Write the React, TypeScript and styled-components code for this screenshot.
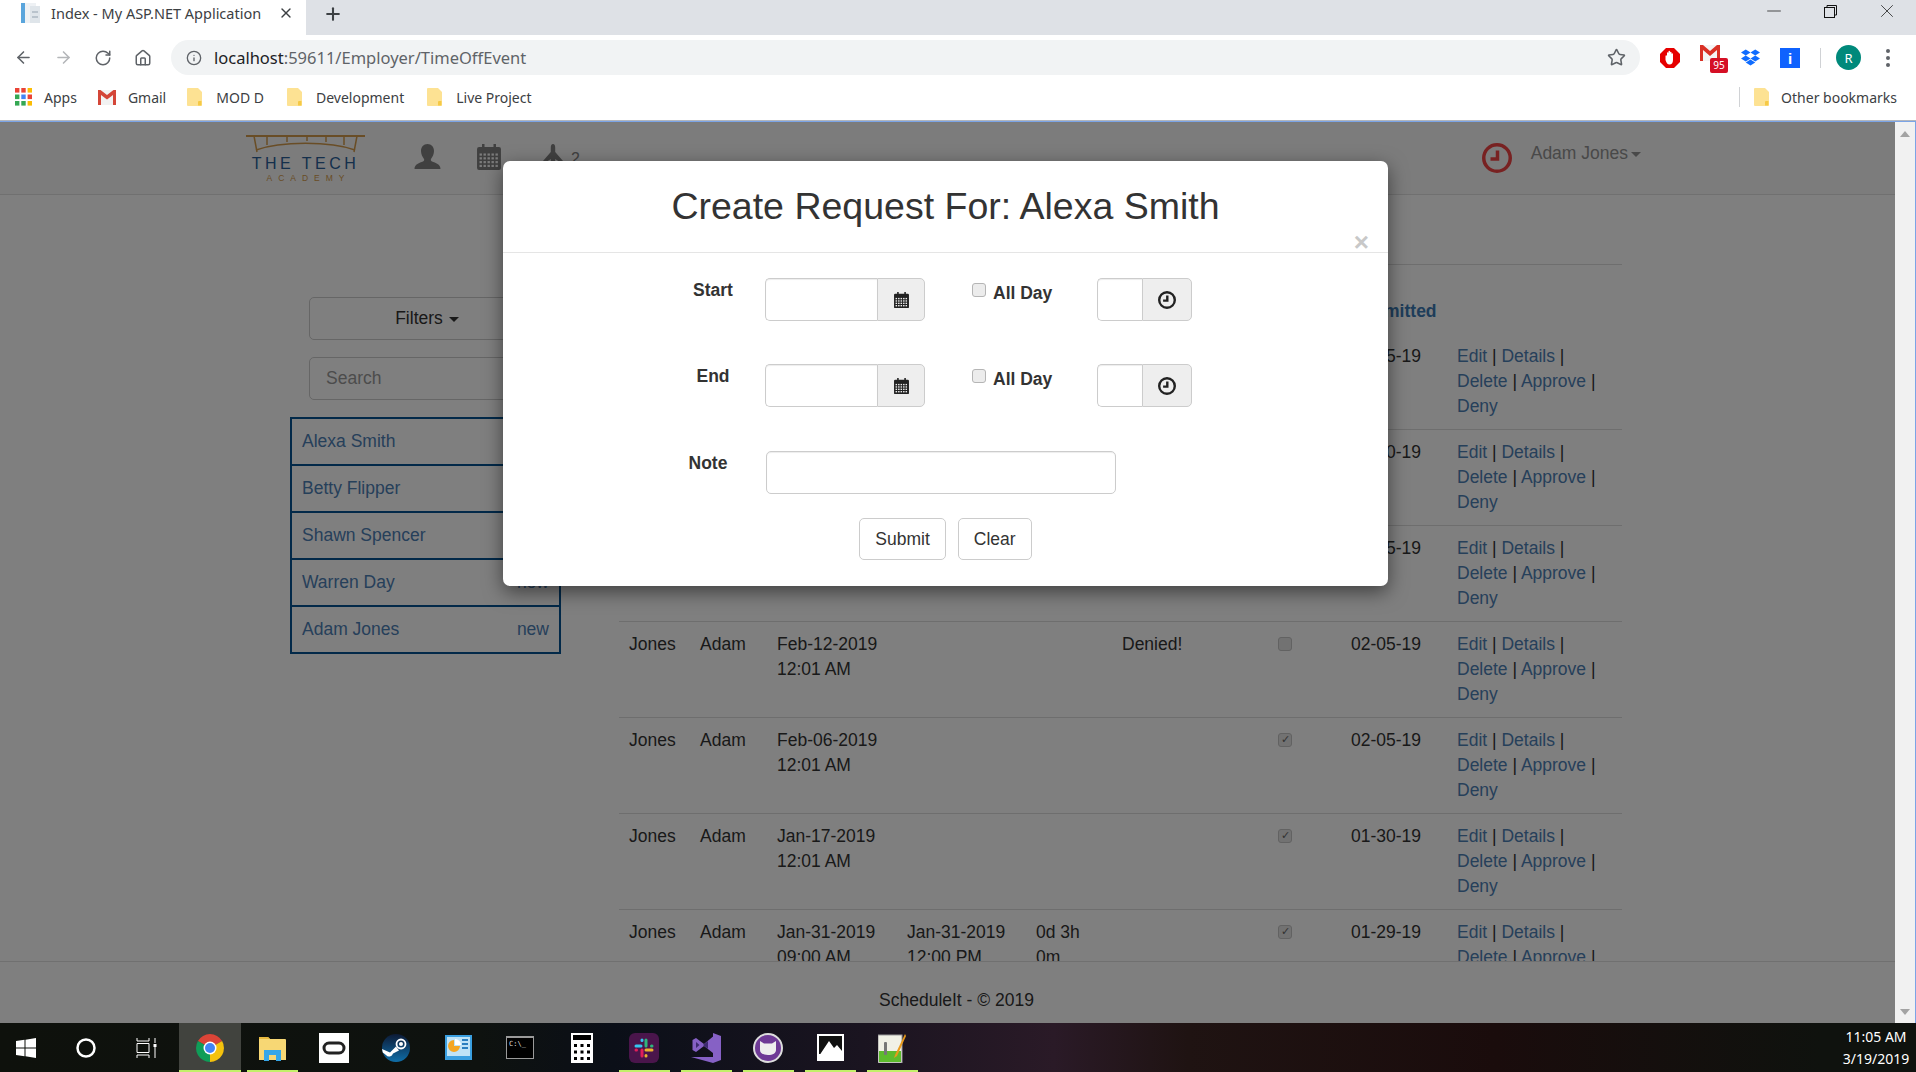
import React from "react";
import styled, { createGlobalStyle } from "styled-components";
import { ArrowLeft, ArrowRight, RotateCw, Home, Info, Star, X, Plus, Minus } from "lucide-react";
import { FaDropbox } from "react-icons/fa";

const GlobalStyle = createGlobalStyle`
  html, body { margin: 0; padding: 0; overflow: hidden; }
  * { box-sizing: border-box; }
`;

const CHROME_FONT = `"Noto Sans", "Open Sans", sans-serif`;
const PAGE_FONT = `"Liberation Sans", Arial, sans-serif`;

const Screen = styled.div`
  width: 1916px;
  height: 1072px;
  display: flex;
  flex-direction: column;
  overflow: hidden;
  font-family: ${PAGE_FONT};
  background: #fff;
`;

/* ---- browser chrome ---- */

const TabStrip = styled.div`
  height: 35px;
  flex: none;
  background: #dee1e6;
  display: flex;
  align-items: center;
`;

const Tab = styled.div`
  width: 306px;
  height: 35px;
  background: #fff;
  display: flex;
  align-items: center;
  padding: 0 12px 9px 21px;
  font-family: ${CHROME_FONT};
  font-size: 14.5px;
  color: #3c4043;
`;

const TabTitle = styled.span`
  margin-left: 10px;
  flex: 1;
  white-space: nowrap;
`;

const NewTab = styled.div`
  margin-left: 17px;
  display: flex;
  color: #3c4043;
  padding-bottom: 7px;
`;

const WindowControls = styled.div`
  margin-left: auto;
  display: flex;
  align-items: center;
  gap: 39px;
  padding: 0 18px 13px 0;
  color: #111;
`;

const Toolbar = styled.div`
  height: 47px;
  flex: none;
  background: #fff;
  display: flex;
  align-items: center;
  padding: 0 0 2px 14px;
`;

const NavButton = styled.div<{ $muted?: boolean }>`
  width: 40px;
  display: flex;
  color: ${(p) => (p.$muted ? "#b4b6b9" : "#5f6368")};
`;

const UrlPill = styled.div`
  width: 1469px;
  height: 35px;
  margin-left: -3px;
  margin-right: 20px;
  border-radius: 18px;
  background: #f1f3f4;
  display: flex;
  align-items: center;
  padding: 0 14px 0 15px;
  color: #5f6368;
  font-family: ${CHROME_FONT};
  font-size: 16.5px;
`;

const UrlText = styled.span`
  margin-left: 12px;
  flex: 1;
  white-space: nowrap;
`;

const UrlHost = styled.span`
  color: #202124;
`;

const ExtRow = styled.div`
  display: flex;
  align-items: center;
`;

const ExtSlot = styled.div<{ $w: number }>`
  width: ${(p) => p.$w}px;
  display: flex;
`;

const ToolbarDivider = styled.div`
  width: 1px;
  height: 20px;
  background: #d0d2d5;
  margin: 0 15px 0 20px;
`;

const Avatar = styled.div`
  width: 25px;
  height: 25px;
  border-radius: 50%;
  background: #00897b;
  color: #fff;
  font-family: ${CHROME_FONT};
  font-size: 13px;
  display: flex;
  align-items: center;
  justify-content: center;
`;

const Kebab = styled.div`
  margin-left: 25px;
  display: flex;
  flex-direction: column;
  gap: 3px;
`;

const KebabDot = styled.span`
  width: 4px;
  height: 4px;
  border-radius: 50%;
  background: #5f6368;
`;

const BookmarkBar = styled.div`
  height: 39px;
  flex: none;
  background: #fff;
  border-bottom: 1px solid #b3b7bf;
  display: flex;
  align-items: center;
  gap: 21px;
  padding: 0 19px 8px 15px;
  font-family: ${CHROME_FONT};
  font-size: 14px;
  color: #3c4043;
`;

const Bookmark = styled.div<{ $gap?: number; $push?: number }>`
  display: flex;
  align-items: center;
  gap: ${(p) => p.$gap ?? 12}px;
  margin-left: ${(p) => p.$push ?? 0}px;
  white-space: nowrap;
`;

const BookmarkDivider = styled.div`
  width: 1px;
  height: 20px;
  background: #d0d2d5;
  margin-left: auto;
  margin-right: -7px;
`;

/* ---- page ---- */

const Viewport = styled.div`
  flex: 1;
  min-height: 0;
  display: flex;
  border-top: 1px solid #7ba4e6;
  border-right: 1px solid #7ba4e6;
`;

const Page = styled.div`
  position: relative;
  flex: 1;
  min-width: 0;
  display: flex;
  flex-direction: column;
  color: #333;
  font-size: 17.5px;
  line-height: 25px;
`;

const Scrollbar = styled.div`
  width: 20px;
  flex: none;
  background: #f1f1f1;
  display: flex;
  flex-direction: column;
  justify-content: space-between;
  align-items: center;
  padding: 9px 0 8px;
`;

const ScrollArrow = styled.div<{ $down?: boolean }>`
  width: 0;
  height: 0;
  border-left: 5px solid transparent;
  border-right: 5px solid transparent;
  ${(p) => (p.$down ? "border-top: 6px solid #a3a3a3;" : "border-bottom: 6px solid #a3a3a3;")}
`;

const TopNav = styled.nav`
  height: 73px;
  flex: none;
  background: #f8f8f8;
  border-bottom: 1px solid #e0e0e0;
  display: flex;
  padding: 13px 254px 0 246px;
`;

const Logo = styled.div`
  width: 119px;
  display: flex;
  flex-direction: column;
  align-items: center;
`;

const LogoMain = styled.span`
  margin-top: 3px;
  font-size: 16px;
  line-height: 16px;
  letter-spacing: 3.5px;
  white-space: nowrap;
  color: #2a6098;
`;

const LogoSub = styled.span`
  margin-top: 2px;
  padding-left: 6px;
  font-size: 8.5px;
  line-height: 9px;
  letter-spacing: 6px;
  white-space: nowrap;
  color: #d39b4c;
`;

const NavIcons = styled.div`
  display: flex;
  align-items: flex-start;
  padding: 9px 0 0 49px;
`;

const NavIcon = styled.div<{ $w: number }>`
  width: ${(p) => p.$w}px;
  display: flex;
`;

const NavBadge = styled.sup`
  font-size: 16px;
  line-height: 16px;
  margin: 7px 0 0 8px;
  color: #808080;
`;

const UserMenu = styled.div`
  margin-left: auto;
  display: flex;
  align-items: flex-start;
  gap: 19px;
  padding-top: 8px;
  color: #929292;
`;

const UserName = styled.span`
  display: flex;
  align-items: center;
  gap: 3px;
  margin-top: -2px;
`;

const Caret = styled.span`
  display: inline-block;
  width: 0;
  height: 0;
  margin-top: 2px;
  border-left: 5px solid transparent;
  border-right: 5px solid transparent;
  border-top: 5px solid currentColor;
`;

const Main = styled.main`
  flex: 1;
  min-height: 0;
  overflow: hidden;
  display: flex;
  gap: 58px;
  padding-left: 290px;
`;

const Sidebar = styled.aside`
  width: 271px;
  flex: none;
  padding-top: 102px;
`;

const FilterButton = styled.div`
  width: 236px;
  height: 43px;
  margin-left: 19px;
  border: 1px solid #ccc;
  border-radius: 5px;
  background: #fff;
  display: flex;
  align-items: center;
  justify-content: center;
  gap: 6px;
`;

const SearchBox = styled.input`
  display: block;
  width: 236px;
  height: 43px;
  margin: 17px 0 17px 19px;
  padding: 0 16px;
  border: 1px solid #ccc;
  border-radius: 5px;
  font: inherit;
  &::placeholder {
    color: #999;
  }
`;

const PeopleList = styled.div`
  border: 2px solid #045292;
`;

const PersonRow = styled.div`
  height: 47px;
  display: flex;
  align-items: center;
  justify-content: space-between;
  padding: 0 10px 0 10px;
  color: #4d80b5;
  border-bottom: 2px solid #045292;
  &:last-child {
    height: 45px;
    border-bottom: 0;
  }
`;

const TableWrap = styled.div`
  width: 1003px;
  flex: none;
  padding-top: 69px;
`;

const Table = styled.table`
  width: 1003px;
  table-layout: fixed;
  border-collapse: collapse;
  border-top: 1px solid #ddd;
`;

const HeadCell = styled.th`
  height: 69px;
  padding: 34px 10px 9px;
  text-align: left;
  vertical-align: top;
  color: #3c7ab4;
  font-weight: 700;
  white-space: nowrap;
`;

const Cell = styled.td`
  height: 96px;
  padding: 10px;
  vertical-align: top;
  border-bottom: 1px solid #ddd;
`;

const CheckCell = styled(Cell)`
  padding-top: 15px;
`;

const ActionLink = styled.a`
  color: #4d80b5;
  text-decoration: none;
`;

const RowCheck = styled.input`
  appearance: none;
  display: block;
  position: relative;
  width: 14px;
  height: 14px;
  margin: 0;
  border: 1px solid #c4c4c4;
  border-radius: 3px;
  background: #e4e4e4;
  &:checked::after {
    content: "✓";
    position: absolute;
    left: 2px;
    top: 0;
    font-size: 11px;
    line-height: 12px;
    font-weight: 700;
    font-family: "DejaVu Sans", sans-serif;
    color: #666;
  }
`;

const Footer = styled.footer`
  height: 62px;
  flex: none;
  border-top: 1px solid #e0e0e0;
  padding: 26px 0 0 18px;
  text-align: center;
`;

/* ---- modal ---- */

const Backdrop = styled.div`
  position: absolute;
  inset: 0;
  background: rgba(0, 0, 0, 0.5);
  display: flex;
  justify-content: center;
  align-items: flex-start;
  padding: 39px 4px 0 0;
`;

const Modal = styled.div`
  width: 885px;
  height: 425px;
  background: #fff;
  border-radius: 7px;
  box-shadow: 0 6px 19px rgba(0, 0, 0, 0.5);
  display: flex;
  flex-direction: column;
`;

const ModalHeader = styled.div`
  position: relative;
  height: 92px;
  flex: none;
  padding-top: 20px;
  border-bottom: 1px solid #e5e5e5;
  text-align: center;
`;

const ModalTitle = styled.h2`
  margin: 0;
  font-size: 37.5px;
  line-height: 50px;
  font-weight: 500;
  color: #333;
`;

const CloseMark = styled.span`
  position: absolute;
  right: 19px;
  bottom: -3px;
  font-size: 26px;
  line-height: 26px;
  font-weight: 700;
  color: #c8c8c8;
`;

const ModalBody = styled.div`
  padding-top: 25px;
`;

const FormRow = styled.div<{ $gap: number }>`
  display: grid;
  grid-template-columns: 262px 160px 172px 95px;
  align-items: start;
  margin-bottom: ${(p) => p.$gap}px;
`;

const FieldLabel = styled.label<{ $nudge?: number }>`
  justify-self: end;
  width: 104px;
  padding-right: ${(p) => p.$nudge ?? 0}px;
  text-align: center;
  font-weight: 700;
`;

const InputGroup = styled.div`
  display: flex;
  height: 43px;
`;

const TextInput = styled.input<{ $w: number }>`
  width: ${(p) => p.$w}px;
  height: 100%;
  flex: none;
  border: 1px solid #ccc;
  border-right: 0;
  border-radius: 5px 0 0 5px;
  box-shadow: inset 0 1px 1px rgba(0, 0, 0, 0.075);
  outline: none;
`;

const Addon = styled.span`
  flex: 1;
  display: flex;
  align-items: center;
  justify-content: center;
  background: #eee;
  border: 1px solid #ccc;
  border-radius: 0 5px 5px 0;
  padding-top: 1px;
`;

const AllDay = styled.label`
  display: flex;
  align-items: flex-start;
  gap: 7px;
  padding: 3px 0 0 47px;
  font-weight: 700;
`;

const AllDayBox = styled.input`
  appearance: none;
  width: 14px;
  height: 14px;
  margin: 2px 0 0;
  border: 1px solid #b5b5b5;
  border-radius: 3px;
  background: #ececec;
`;

const NoteInput = styled.input`
  display: block;
  width: 350px;
  height: 43px;
  margin-left: 1px;
  border: 1px solid #ccc;
  border-radius: 5px;
  box-shadow: inset 0 1px 1px rgba(0, 0, 0, 0.075);
`;

const NoteSlot = styled.div`
  grid-column: 2 / span 3;
`;

const ButtonRow = styled.div`
  display: flex;
  justify-content: center;
  gap: 12px;
`;

const ActionButton = styled.button`
  height: 42px;
  padding: 0 15px;
  background: #fff;
  border: 1px solid #ccc;
  border-radius: 5px;
  font: inherit;
  color: #333;
`;

/* ---- taskbar ---- */

const Taskbar = styled.div`
  height: 49px;
  flex: none;
  display: flex;
  align-items: stretch;
  color: #fff;
  background: linear-gradient(
    90deg,
    #0e110c 0%,
    #0e120f 25%,
    #0b0f18 32%,
    #1a1420 45%,
    #2a1a27 55%,
    #1f1312 62%,
    #1a0c0c 78%,
    #0f120e 95%
  );
`;

const TaskSlot = styled.div<{ $w?: number; $active?: boolean; $open?: boolean }>`
  position: relative;
  width: ${(p) => p.$w ?? 62}px;
  flex: none;
  display: flex;
  align-items: center;
  justify-content: center;
  background: ${(p) => (p.$active ? "#41433e" : "transparent")};
  &::after {
    content: "";
    display: ${(p) => (p.$open ? "block" : "none")};
    position: absolute;
    bottom: 0;
    left: ${(p) => (p.$active ? 0 : 6)}px;
    right: ${(p) => (p.$active ? 0 : 5)}px;
    height: 2px;
    background: #c2f06a;
  }
`;

const TrayClock = styled.div`
  margin-left: auto;
  padding: 3px 4px 0 0;
  width: 76px;
  text-align: center;
  font-family: ${CHROME_FONT};
  font-size: 14px;
  line-height: 22px;
  white-space: nowrap;
`;

/* ---- drawings ---- */

const FolderIcon = () => (
  <svg width="15" height="18" viewBox="0 0 15 18">
    <path d="M1 0h10l4 4v13a1 1 0 0 1-1 1H1a1 1 0 0 1-1-1V1a1 1 0 0 1 1-1z" fill="#fde293" />
    <path d="M11 17.5h3.5V13H12a1 1 0 0 0-1 1z" fill="#f6c945" />
  </svg>
);

const AppsIcon = () => {
  const colors = ["#ea4335", "#ea4335", "#fbbc04", "#34a853", "#4285f4", "#ea4335", "#34a853", "#34a853", "#fbbc04"];
  return (
    <svg width="17" height="18" viewBox="0 0 17 18">
      {colors.map((c, i) => (
        <rect key={i} x={(i % 3) * 6.3} y={Math.floor(i / 3) * 6.5} width="4.4" height="4.6" fill={c} />
      ))}
    </svg>
  );
};

const GmailMark = () => (
  <svg width="18" height="15" viewBox="0 0 18 15">
    <rect width="18" height="15" fill="#f2f2f2" />
    <path d="M0 0h2.5l6.5 5 6.5-5H18v15h-3V5L9 9.5 3 5v10H0z" fill="#d44638" />
  </svg>
);

const AdblockIcon = () => (
  <svg width="20" height="20" viewBox="0 0 20 20">
    <path d="M6 0h8l6 6v8l-6 6H6l-6-6V6z" fill="#e60000" />
    <path d="M5.500 8c0-1 1.500-1 1.500 0V5c0-1 1.500-1 1.500 0V3.500c0-1 1.500-1 1.500 0V4.500c0-1 1.500-1 1.500 0V6c0-1 1.500-1 1.500 0v6c0 3-1.500 4.500-3.500 4.500S6.500 15 5.500 12z" fill="#fff" />
  </svg>
);

const GmailBadge = styled.span`
  position: absolute;
  left: 10px;
  top: 13px;
  width: 18px;
  height: 15px;
  border-radius: 2px;
  background: #d50f25;
  color: #fff;
  font-family: ${CHROME_FONT};
  font-size: 10px;
  line-height: 15px;
  text-align: center;
`;

const GmailExt = styled.div`
  position: relative;
  width: 28px;
  height: 26px;
`;

const GmailExtIcon = () => (
  <GmailExt>
    <svg width="20" height="16" viewBox="0 0 20 16">
      <rect width="20" height="16" fill="#f4f4f4" />
      <path d="M0 0h3l7 6 7-6h3v16h-3V5l-7 6-7-6v11H0z" fill="#d93025" />
    </svg>
    <GmailBadge>95</GmailBadge>
  </GmailExt>
);

const InfoExt = styled.div`
  width: 20px;
  height: 20px;
  background: #0f62fe;
  color: #fff;
  font-family: ${PAGE_FONT};
  font-weight: 700;
  font-size: 15px;
  line-height: 22px;
  text-align: center;
`;

const TabFavicon = () => (
  <svg width="20" height="22" viewBox="0 0 20 22">
    <rect x="0" y="1" width="4" height="20" fill="#5aa5dc" />
    <rect x="4" y="1" width="11" height="20" fill="#eef1f4" />
    <rect x="9" y="4" width="10" height="17" fill="#dfe5ea" />
    <rect x="11" y="9" width="6" height="2" fill="#b9c3cc" />
    <rect x="11" y="14" width="6" height="2" fill="#b9c3cc" />
  </svg>
);

const RestoreIcon = () => (
  <svg width="13" height="13" viewBox="0 0 13 13" fill="none" stroke="#111" strokeWidth="1">
    <rect x="0.500" y="2.500" width="10" height="10" />
    <path d="M3 2.500V.5h9.500V10h-2" />
  </svg>
);

const BridgeLogo = () => (
  <svg width="119" height="18" viewBox="0 0 119 18" fill="none" stroke="#d39b4c" strokeWidth="1.5">
    <path d="M0 1h119" strokeWidth="2" />
    <path d="M8 1l3 16M21 1v9M41 1v6M61 1v5M80 1v6M98 1v9M111 1l-3 16" />
    <path d="M10 15C35 6 84 6 109 15" />
  </svg>
);

const UserGlyph = () => (
  <svg width="27" height="25" viewBox="0 0 26 25" fill="#808080">
    <path d="M13 0C9 0 6.500 3 6.500 7c0 3 1.500 6 3 8 .5 1 0 2-1 2.500C5 19 0 20 0 25h26c0-5-5-6-8.500-7.500-1-.5-1.500-1.500-1-2.500 1.500-2 3-5 3-8 0-4-2.500-7-6.500-7z" />
  </svg>
);

const CalendarGlyph = ({ size, color, hole }: { size: number; color: string; hole: string }) => (
  <svg width={size} height={size * 1.08} viewBox="0 0 24 26">
    <rect x="5" y="0" width="2.500" height="5" fill={color} />
    <rect x="16.500" y="0" width="2.500" height="5" fill={color} />
    <rect x="0" y="3" width="24" height="23" rx="2" fill={color} />
    {Array.from({ length: 20 }).map((_, i) => (
      <rect key={i} x={2.5 + (i % 5) * 4} y={9.5 + Math.floor(i / 5) * 3.8} width="2.400" height="2.200" fill={hole} />
    ))}
  </svg>
);

const PlaneGlyph = () => (
  <svg width="20" height="25" viewBox="0 0 20 25" fill="#808080">
    <path d="M10 0c1.500 0 2.200 1.500 2.200 3.500V8L20 17v3l-7.800-5v5l2.800 3v2H5v-2l2.800-3v-5L0 20v-3l7.800-9V3.500C7.800 1.500 8.500 0 10 0z" />
  </svg>
);

const ClockGlyph = ({ size, color, ring, hand }: { size: number; color: string; ring: number; hand: number }) => (
  <svg width={size} height={size} viewBox="0 0 30 30" fill="none" stroke={color}>
    <circle cx="15" cy="15" r={15 - ring / 2} strokeWidth={ring} />
    <path d="M15.500 7.500v8.500H8.500" strokeWidth={hand} />
  </svg>
);

const WinLogo = () => (
  <svg width="20" height="20" viewBox="0 0 20 20" fill="#fff">
    <path d="M0 3l8.500-1.200V9.500H0zM9.500 1.700L20 0v9.500H9.500zM0 10.500h8.500v7.700L0 17zM9.500 10.500H20V20L9.500 18.300z" />
  </svg>
);

const CortanaRing = () => (
  <svg width="20" height="20" viewBox="0 0 20 20" fill="none" stroke="#fff" strokeWidth="2.500">
    <circle cx="10" cy="10" r="8.500" />
  </svg>
);

const TaskViewIcon = () => (
  <svg width="21" height="20" viewBox="0 0 21 20" fill="none" stroke="#fff" strokeWidth="1">
    <path d="M1 0v3h12V0M1 5.500h12v9H1zM1 20v-3h12v3M19 0v5M19 9v11" />
    <rect x="17.500" y="6" width="3" height="3" fill="#fff" stroke="none" />
  </svg>
);

const ChromeIcon = () => (
  <svg width="28" height="28" viewBox="0 0 28 28">
    <path d="M14 14L1.900 7A14 14 0 0 1 26.100 7z" fill="#db4437" />
    <path d="M14 14l12.100-7A14 14 0 0 1 14 28z" fill="#f4c20d" />
    <path d="M14 14v14A14 14 0 0 1 1.900 7z" fill="#0f9d58" />
    <circle cx="14" cy="14" r="6.500" fill="#fff" />
    <circle cx="14" cy="14" r="5" fill="#4285f4" />
  </svg>
);

const ExplorerIcon = () => (
  <svg width="27" height="26" viewBox="0 0 27 26">
    <path d="M0 3a1 1 0 0 1 1-1h8l2 2h15a1 1 0 0 1 1 1v20H0z" fill="#f7d774" />
    <path d="M0 2h9l2 2H0z" fill="#e8b93f" />
    <path d="M5 26V15h17v11h-5v-6h-7v6z" fill="#35a6e8" />
  </svg>
);

const OculusIcon = () => (
  <svg width="30" height="30" viewBox="0 0 30 30">
    <rect width="30" height="30" fill="#fff" />
    <rect x="5" y="10" width="20" height="10" rx="5" fill="none" stroke="#222" strokeWidth="3" />
  </svg>
);

const SteamIcon = () => (
  <svg width="28" height="28" viewBox="0 0 28 28">
    <defs>
      <linearGradient id="steamBg" x1="0" y1="0" x2="0" y2="1">
        <stop offset="0" stopColor="#0d1a35" />
        <stop offset="1" stopColor="#0f6ea8" />
      </linearGradient>
    </defs>
    <circle cx="14" cy="14" r="14" fill="url(#steamBg)" />
    <circle cx="19" cy="10" r="4.500" fill="none" stroke="#fff" strokeWidth="1.800" />
    <circle cx="19" cy="10" r="2" fill="#fff" />
    <path d="M0 15l8 3.500 6-6 3 4-6 3a4 4 0 0 1-7 1.500L.8 18.500z" fill="#fff" />
  </svg>
);

const ControlPanelIcon = () => (
  <svg width="27" height="27" viewBox="0 0 27 27">
    <rect y="1" width="27" height="25" fill="#3a9fe0" />
    <rect x="2" y="3" width="23" height="19" fill="#bfe3f7" />
    <path d="M9 6a6 6 0 1 0 6 6H9z" fill="#f5a623" />
    <path d="M10 5v6h6a6 6 0 0 0-6-6z" fill="#fff" />
    <path d="M17 6h6M17 10h6M17 14h6" stroke="#2a7fc0" strokeWidth="2" />
  </svg>
);

const CmdBox = styled.div`
  width: 28px;
  height: 23px;
  border: 1px solid #9a9a9a;
  border-top-width: 2px;
  background: #000;
  color: #ddd;
  font-family: "DejaVu Sans Mono", monospace;
  font-size: 7px;
  line-height: 12px;
  padding-left: 2px;
  white-space: nowrap;
`;

const CalcIcon = () => (
  <svg width="22" height="30" viewBox="0 0 22 30">
    <rect width="22" height="30" fill="#fff" />
    <rect x="2" y="2" width="18" height="5" fill="#000" />
    {Array.from({ length: 9 }).map((_, i) => (
      <rect key={i} x={3 + (i % 3) * 6.500} y={11 + Math.floor(i / 3) * 6.500} width="3" height="3" fill="#000" />
    ))}
  </svg>
);

const SlackIcon = () => (
  <svg width="30" height="30" viewBox="0 0 30 30" fill="none" strokeWidth="3" strokeLinecap="round">
    <rect width="30" height="30" rx="6" fill="#4a154b" />
    <path d="M7 13h5M13 7v.5" stroke="#36c5f0" />
    <path d="M17 7v6M23 13h-.5" stroke="#2eb67d" />
    <path d="M23 17h-6M17 23v-.5" stroke="#ecb22e" />
    <path d="M13 23v-6M7 17h.5" stroke="#e01e5a" />
  </svg>
);

const VsIcon = () => (
  <svg width="30" height="30" viewBox="0 0 30 30">
    <path d="M22 0l8 3v24l-8 3L0 24l22 0V3.500L13 11 5 5 1.500 7v10L5 19l8-6 9 7z" fill="#8661c5" />
    <path d="M5 9v6l3.500-3zM17 8l-5 4 5 4z" fill="#3e2a70" />
  </svg>
);

const GitHubDesktopIcon = () => (
  <svg width="30" height="30" viewBox="0 0 30 30">
    <circle cx="15" cy="15" r="14" fill="#6e3a96" stroke="#ddd" strokeWidth="2" />
    <path d="M7 8l4 2.500h8L23 8v9c0 3-3 5-8 5s-8-2-8-5z" fill="#eee" />
  </svg>
);

const PhotoIcon = () => (
  <svg width="27" height="27" viewBox="0 0 27 27">
    <rect width="27" height="27" fill="#fff" />
    <rect x="2" y="2" width="23" height="18" fill="#111" />
    <path d="M2 22l10-15 5 7 3-3 5 6v7H2z" fill="#fff" />
  </svg>
);

const NppIcon = () => (
  <svg width="28" height="30" viewBox="0 0 28 30">
    <rect x="0" y="2" width="24" height="28" fill="#f1f1e6" stroke="#999" />
    <rect x="1" y="18" width="22" height="11" fill="#5dbb2d" />
    <rect x="6" y="9" width="3" height="13" rx="1" fill="#777" />
    <path d="M27 1L17 22l-1 3 3-2L28 3z" fill="#e89a1c" />
  </svg>
);

const actions = (
  <>
    <ActionLink href="#">Edit</ActionLink> | <ActionLink href="#">Details</ActionLink> |{" "}
    <ActionLink href="#">Delete</ActionLink> | <ActionLink href="#">Approve</ActionLink> |{" "}
    <ActionLink href="#">Deny</ActionLink>
  </>
);

const people = ["Alexa Smith", "Betty Flipper", "Shawn Spencer", "Warren Day", "Adam Jones"];

type Row = {
  start: string;
  end: string;
  span: string;
  status: string;
  approved: boolean;
  submitted: string;
};

const rows: Row[] = [
  { start: "Mar-20-2019 12:01 AM", end: "", span: "", status: "", approved: true, submitted: "03-15-19" },
  { start: "Mar-12-2019 12:01 AM", end: "", span: "", status: "", approved: true, submitted: "03-10-19" },
  { start: "Mar-01-2019 12:01 AM", end: "", span: "", status: "", approved: true, submitted: "02-25-19" },
  { start: "Feb-12-2019 12:01 AM", end: "", span: "", status: "Denied!", approved: false, submitted: "02-05-19" },
  { start: "Feb-06-2019 12:01 AM", end: "", span: "", status: "", approved: true, submitted: "02-05-19" },
  { start: "Jan-17-2019 12:01 AM", end: "", span: "", status: "", approved: true, submitted: "01-30-19" },
  { start: "Jan-31-2019 09:00 AM", end: "Jan-31-2019 12:00 PM", span: "0d 3h 0m", status: "", approved: true, submitted: "01-29-19" },
];

const columnWidths = [71, 77, 130, 129, 86, 156, 73, 106, 175];
const headings = ["Last", "First", "Start", "End", "Length", "Status", "OK", "Submitted", ""];

const taskIcons: { key: string; icon: React.ReactNode; open?: boolean; active?: boolean }[] = [
  { key: "chrome", icon: <ChromeIcon />, open: true, active: true },
  { key: "explorer", icon: <ExplorerIcon />, open: true },
  { key: "oculus", icon: <OculusIcon /> },
  { key: "steam", icon: <SteamIcon /> },
  { key: "control", icon: <ControlPanelIcon /> },
  { key: "cmd", icon: <CmdBox>C:\_</CmdBox> },
  { key: "calc", icon: <CalcIcon /> },
  { key: "slack", icon: <SlackIcon />, open: true },
  { key: "vs", icon: <VsIcon />, open: true },
  { key: "github", icon: <GitHubDesktopIcon />, open: true },
  { key: "photos", icon: <PhotoIcon />, open: true },
  { key: "npp", icon: <NppIcon />, open: true },
];

const DateField = ({ width, icon }: { width: number; icon: React.ReactNode }) => (
  <InputGroup>
    <TextInput $w={width} />
    <Addon>{icon}</Addon>
  </InputGroup>
);

const calendarAddon = <CalendarGlyph size={15} color="#222" hole="#eee" />;
const clockAddon = <ClockGlyph size={18} color="#222" ring={4} hand={4} />;

const App = () => {
  return (
    <Screen>
      <GlobalStyle />
      <TabStrip>
        <Tab>
          <TabFavicon />
          <TabTitle>Index - My ASP.NET Application</TabTitle>
          <X size={16} strokeWidth={2} />
        </Tab>
        <NewTab>
          <Plus size={20} strokeWidth={2.5} />
        </NewTab>
        <WindowControls>
          <Minus size={22} strokeWidth={0.8} />
          <RestoreIcon />
          <X size={22} strokeWidth={0.8} />
        </WindowControls>
      </TabStrip>

      <Toolbar>
        <NavButton>
          <ArrowLeft size={19} />
        </NavButton>
        <NavButton $muted>
          <ArrowRight size={19} />
        </NavButton>
        <NavButton>
          <RotateCw size={18} />
        </NavButton>
        <NavButton>
          <Home size={18} />
        </NavButton>
        <UrlPill>
          <Info size={16} />
          <UrlText>
            <UrlHost>localhost</UrlHost>:59611/Employer/TimeOffEvent
          </UrlText>
          <Star size={19} />
        </UrlPill>
        <ExtRow>
          <ExtSlot $w={40}>
            <AdblockIcon />
          </ExtSlot>
          <ExtSlot $w={41}>
            <GmailExtIcon />
          </ExtSlot>
          <ExtSlot $w={39}>
            <FaDropbox size={19} color="#0f6cff" />
          </ExtSlot>
          <ExtSlot $w={20}>
            <InfoExt>i</InfoExt>
          </ExtSlot>
          <ToolbarDivider />
          <Avatar>R</Avatar>
          <Kebab>
            <KebabDot />
            <KebabDot />
            <KebabDot />
          </Kebab>
        </ExtRow>
      </Toolbar>

      <BookmarkBar>
        <Bookmark>
          <AppsIcon />
          Apps
        </Bookmark>
        <Bookmark>
          <GmailMark />
          Gmail
        </Bookmark>
        <Bookmark $gap={14}>
          <FolderIcon />
          MOD D
        </Bookmark>
        <Bookmark $gap={14} $push={2}>
          <FolderIcon />
          Development
        </Bookmark>
        <Bookmark $gap={14} $push={2}>
          <FolderIcon />
          Live Project
        </Bookmark>
        <BookmarkDivider />
        <Bookmark>
          <FolderIcon />
          Other bookmarks
        </Bookmark>
      </BookmarkBar>

      <Viewport>
        <Page>
          <TopNav>
            <Logo>
              <BridgeLogo />
              <LogoMain>THE TECH</LogoMain>
              <LogoSub>ACADEMY</LogoSub>
            </Logo>
            <NavIcons>
              <NavIcon $w={63}>
                <UserGlyph />
              </NavIcon>
              <NavIcon $w={66}>
                <CalendarGlyph size={24} color="#808080" hole="#f8f8f8" />
              </NavIcon>
              <NavIcon $w={63}>
                <PlaneGlyph />
                <NavBadge>2</NavBadge>
              </NavIcon>
            </NavIcons>
            <UserMenu>
              <ClockGlyph size={30} color="#f04545" ring={3.5} hand={3.5} />
              <UserName>
                Adam Jones
                <Caret />
              </UserName>
            </UserMenu>
          </TopNav>

          <Main>
            <Sidebar>
              <FilterButton>
                Filters
                <Caret />
              </FilterButton>
              <SearchBox placeholder="Search" readOnly />
              <PeopleList>
                {people.map((name) => (
                  <PersonRow key={name}>
                    <span>{name}</span>
                    <span>new</span>
                  </PersonRow>
                ))}
              </PeopleList>
            </Sidebar>

            <TableWrap>
              <Table>
                <colgroup>
                  {columnWidths.map((w, i) => (
                    <col key={i} width={w} />
                  ))}
                </colgroup>
                <thead>
                  <tr>
                    {headings.map((h, i) => (
                      <HeadCell key={i}>{h}</HeadCell>
                    ))}
                  </tr>
                </thead>
                <tbody>
                  {rows.map((r, i) => (
                    <tr key={i}>
                      <Cell>Jones</Cell>
                      <Cell>Adam</Cell>
                      <Cell>{r.start}</Cell>
                      <Cell>{r.end}</Cell>
                      <Cell>{r.span}</Cell>
                      <Cell>{r.status}</Cell>
                      <CheckCell>
                        <RowCheck type="checkbox" checked={r.approved} readOnly disabled />
                      </CheckCell>
                      <Cell>{r.submitted}</Cell>
                      <Cell>{actions}</Cell>
                    </tr>
                  ))}
                </tbody>
              </Table>
            </TableWrap>
          </Main>

          <Footer>ScheduleIt - © 2019</Footer>

          <Backdrop>
            <Modal>
              <ModalHeader>
                <ModalTitle>Create Request For: Alexa Smith</ModalTitle>
                <CloseMark>×</CloseMark>
              </ModalHeader>
              <ModalBody>
                <FormRow $gap={43}>
                  <FieldLabel>Start</FieldLabel>
                  <DateField width={112} icon={calendarAddon} />
                  <AllDay>
                    <AllDayBox type="checkbox" />
                    <span>All Day</span>
                  </AllDay>
                  <DateField width={45} icon={clockAddon} />
                </FormRow>
                <FormRow $gap={44}>
                  <FieldLabel>End</FieldLabel>
                  <DateField width={112} icon={calendarAddon} />
                  <AllDay>
                    <AllDayBox type="checkbox" />
                    <span>All Day</span>
                  </AllDay>
                  <DateField width={45} icon={clockAddon} />
                </FormRow>
                <FormRow $gap={24}>
                  <FieldLabel $nudge={10}>Note</FieldLabel>
                  <NoteSlot>
                    <NoteInput />
                  </NoteSlot>
                </FormRow>
                <ButtonRow>
                  <ActionButton>Submit</ActionButton>
                  <ActionButton>Clear</ActionButton>
                </ButtonRow>
              </ModalBody>
            </Modal>
          </Backdrop>
        </Page>
        <Scrollbar>
          <ScrollArrow />
          <ScrollArrow $down />
        </Scrollbar>
      </Viewport>

      <Taskbar>
        <TaskSlot $w={52}>
          <WinLogo />
        </TaskSlot>
        <TaskSlot $w={68}>
          <CortanaRing />
        </TaskSlot>
        <TaskSlot $w={52}>
          <TaskViewIcon />
        </TaskSlot>
        <TaskSlot $w={7} />
        {taskIcons.map((t) => (
          <TaskSlot key={t.key} $active={t.active} $open={t.open}>
            {t.icon}
          </TaskSlot>
        ))}
        <TrayClock>
          11:05 AM
          <br />
          3/19/2019
        </TrayClock>
      </Taskbar>
    </Screen>
  );
};

export default App;
